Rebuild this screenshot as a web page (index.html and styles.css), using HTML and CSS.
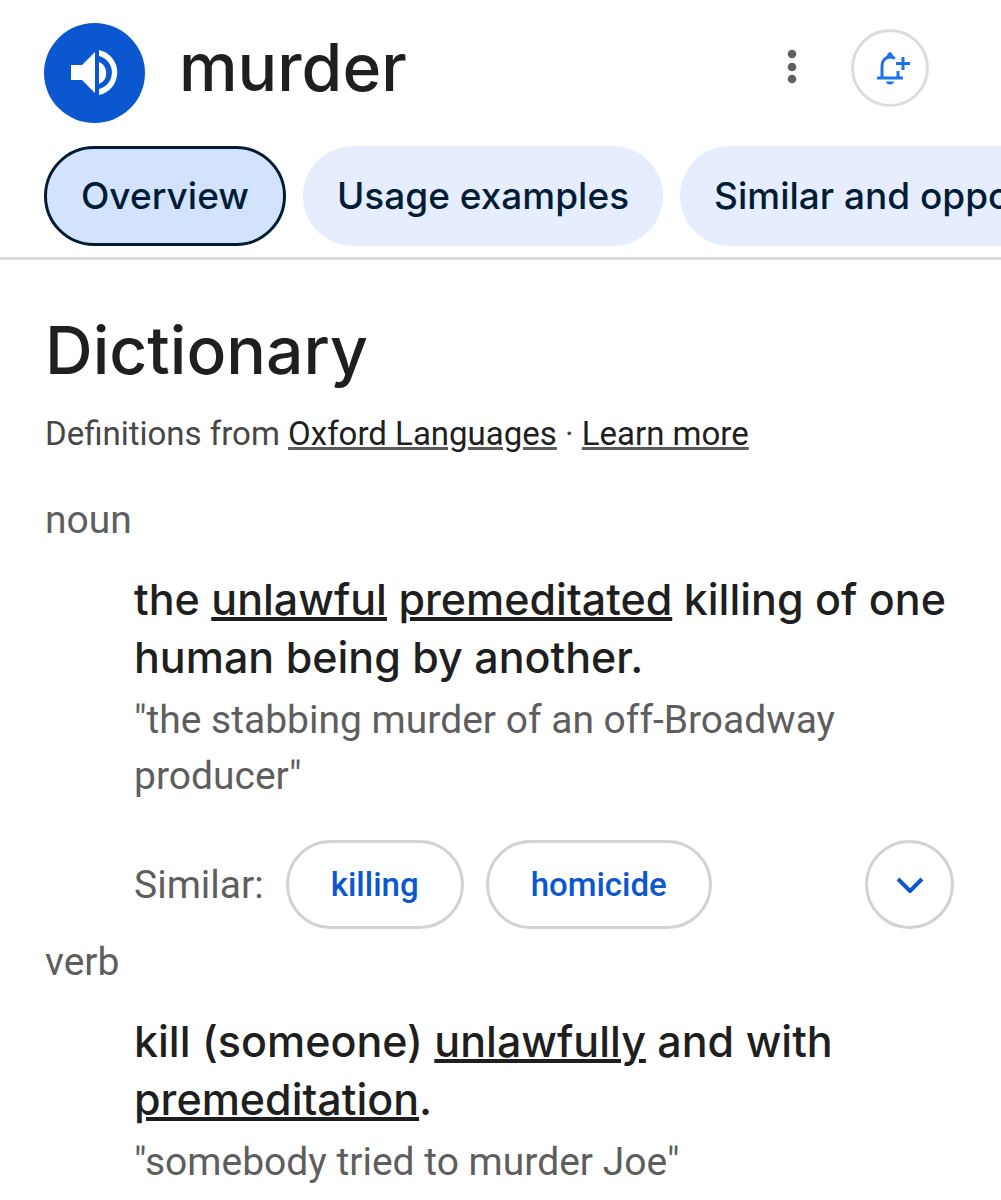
FILE: index.html
```html
<!DOCTYPE html>
<html lang="en">
<head>
<meta charset="utf-8">
<meta name="viewport" content="width=device-width, initial-scale=1">
<title>murder - Dictionary</title>
<link rel="stylesheet" href="styles.css">
</head>
<body>
<header class="header">
  <div class="title-row">
    <button class="speak" type="button" aria-label="Listen to pronunciation">
      <svg viewBox="0 0 48 46" width="48" height="46" fill="#fff" aria-hidden="true">
        <path d="M0 15H11L24 2V43L11 30H0Z"/>
        <path d="M28 12A12 12 0 0 1 28 34Z"/>
        <path d="M28 0A23 23 0 0 1 28 45V39A17 17 0 0 0 28 6Z"/>
      </svg>
    </button>
    <h1 class="word">murder</h1>
    <button class="more" type="button" aria-label="More options">
      <svg viewBox="0 0 10 36" width="10" height="36" fill="#5f6062" aria-hidden="true">
        <circle cx="5" cy="5" r="4.300"/><circle cx="5" cy="18" r="4.300"/><circle cx="5" cy="30" r="4.300"/>
      </svg>
    </button>
    <button class="notify" type="button" aria-label="Follow this topic">
      <svg viewBox="-6 0 40 34" width="40" height="34" fill="none" stroke="#1a73e8" stroke-width="3" aria-hidden="true">
        <path d="M1 27H27M6 27V15C6 10 9 6.500 14 6C16 6 17.500 6.500 19 7.500M22 20V27M27 6V19M20 12.500H34"/>
        <path d="M10 30.500H18C17.500 34.500 10.500 34.500 10 30.500ZM9.500 6.500L12 2.500Q14 -0.500 16 2.500L18 6Z" fill="#1a73e8" stroke="none"/>
      </svg>
    </button>
  </div>
  <nav class="tabs" aria-label="Sections">
    <a class="tab tab-active" href="#overview" aria-current="page">Overview</a>
    <a class="tab" href="#usage">Usage examples</a>
    <a class="tab" href="#similar">Similar and opposite words</a>
  </nav>
</header>
<main class="content" id="overview">
  <h2 class="heading">Dictionary</h2>
  <p class="source">Definitions from <a href="#oxford">Oxford Languages</a> · <a href="#learn">Learn more</a></p>
  <section>
    <h3 class="pos">noun</h3>
    <div class="sense">
      <p class="definition">the <a href="#unlawful">unlawful</a> <a href="#premeditated">premeditated</a> killing of one human being by another.</p>
      <p class="example">"the stabbing murder of an off-Broadway producer"</p>
      <div class="similar" id="similar">
        <span class="similar-label">Similar:</span>
        <a class="chip" href="#killing">killing</a>
        <a class="chip" href="#homicide">homicide</a>
        <button class="expand" type="button" aria-label="Show more similar words">
          <svg viewBox="0 0 28 16" width="28" height="16" fill="none" stroke="#0b57d0" stroke-width="4" aria-hidden="true"><path d="M2 2L14 14L26 2"/></svg>
        </button>
      </div>
    </div>
  </section>
  <section>
    <h3 class="pos">verb</h3>
    <div class="sense">
      <p class="definition">kill (someone) <a href="#unlawfully">unlawfully</a> and with <a href="#premeditation">premeditation</a>.</p>
      <p class="example">"somebody tried to murder Joe"</p>
    </div>
  </section>
</main>
</body>
</html>
```

FILE: styles.css
```css
* { box-sizing: border-box; }
body { margin: 0; background: #fff; color: #1f1f1f; font-family: Roboto, "Liberation Sans", sans-serif; overflow-x: hidden; }
h1, h2, h3, p { margin: 0; font-weight: 400; }
a { color: inherit; text-decoration-thickness: 4px; text-underline-offset: 2px; }
button { padding: 0; border: 0; background: none; display: flex; align-items: center; justify-content: center; flex: none; cursor: pointer; }
svg { display: block; }

.header { border-bottom: 3px solid #dadce0; padding: 23px 0 11px 44px; }
.title-row { display: flex; align-items: flex-start; padding-right: 72px; }
.speak { width: 101px; height: 100px; border-radius: 50%; background: #0b57d0; }
.word { flex: 1; margin-left: 34px; font: 500 66px/88px Inter, sans-serif; }
.more { width: 48px; height: 88px; margin-right: 35px; }
.notify { width: 78px; height: 78px; margin-top: 6px; border: 3px solid #dadce0; border-radius: 50%; }

.tabs { display: flex; gap: 17px; margin-top: 23px; overflow: hidden; }
.tab { flex: none; height: 100px; padding: 0 34px; border-radius: 50px; background: #e6edff; color: #001d35; font: 500 37px/100px Inter, sans-serif; text-decoration: none; white-space: nowrap; }
.tab-active { border: 3px solid #001d35; background: #d3e3fd; line-height: 94px; }

.content { padding: 50px 47px 20px 45px; }
.heading { font: 500 66px/80px Inter, sans-serif; }
.source { margin-top: 24px; color: #474747; font-size: 33px; line-height: 40px; }
.source a { color: #1f1f1f; text-decoration-color: #5e5e5e; text-decoration-thickness: 3px; }
.pos { margin-top: 42px; color: #5e5e5e; font-size: 39px; line-height: 48px; }
.sense { padding: 26px 0 0 89px; }
.definition { font: 500 43px/58px Inter, sans-serif; }
.example { margin-top: 6px; color: #5e5e5e; font-size: 39px; line-height: 56px; }
.similar { display: flex; align-items: center; gap: 22px; margin-top: 36px; color: #5e5e5e; font-size: 39px; }
.chip { height: 89px; padding: 0 42px; border: 3px solid #d2d2d2; border-radius: 45px; color: #0b57d0; font-weight: 500; font-size: 33px; line-height: 83px; text-decoration: none; }
.expand { width: 89px; height: 89px; margin-left: auto; border: 3px solid #d2d2d2; border-radius: 50%; }
section + section .pos { margin-top: 9px; }
```
